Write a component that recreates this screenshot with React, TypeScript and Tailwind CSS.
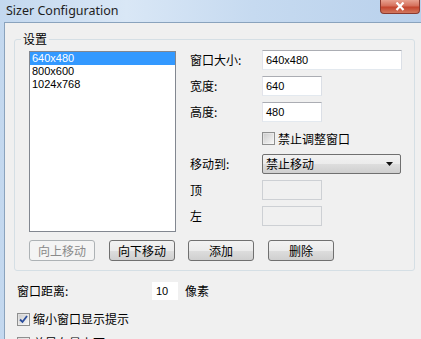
import React from 'react';

const cjk = { fontFamily: '"Noto Sans CJK SC", "Liberation Sans", sans-serif' };
const latin = { fontFamily: '"Liberation Sans", "DejaVu Sans", sans-serif' };

function CheckBox({ checked }: { checked?: boolean }) {
  return (
    <span className="w-[13px] h-[13px] border border-[#8e8f8f] bg-gradient-to-br from-[#dcdcdc] to-[#f8f8f8] flex items-center justify-center shrink-0">
      <span className="w-[9px] h-[9px] bg-gradient-to-br from-[#cfcfcf] to-[#f4f4f4] flex items-center justify-center">
        {checked && (
          <svg width="9" height="9" viewBox="0 0 9 9">
            <path d="M1 4.5 L3.5 7 L8 1" fill="none" stroke="#2a4d9c" strokeWidth="1.8" />
          </svg>
        )}
      </span>
    </span>
  );
}

function Btn({ label, disabled }: { label: string; disabled?: boolean }) {
  return (
    <div
      className={`w-[66px] h-[21px] rounded-[3px] border flex items-center justify-center text-[12px] ${
        disabled
          ? 'border-[#adb2b5] bg-[#f4f4f4] text-[#8a8a8a]'
          : 'border-[#707070] bg-[linear-gradient(#f2f2f2_0%,#ebebeb_50%,#dddddd_51%,#cfcfcf_100%)] text-black'
      }`}
      style={cjk}
    >
      {label}
    </div>
  );
}

function Field({ w, value, disabled }: { w: string; value?: string; disabled?: boolean }) {
  return (
    <div
      className={`${w} h-[20px] border flex items-center pl-[3px] text-[11px] ${
        disabled ? 'border-[#cdd0d4] bg-[#f0f0f0]' : 'border-[#abadb3] border-t-[#abadb3] border-l-[#e2e3ea] border-r-[#dbdfe6] border-b-[#e3e9ef] bg-white'
      }`}
      style={latin}
    >
      {value}
    </div>
  );
}

export default function App() {
  const items = ['640x480', '800x600', '1024x768'];
  return (
    <div className="w-[421px] h-[339px] overflow-hidden bg-[linear-gradient(90deg,#c3d8ef,#d9e7f6_30%,#c6daf0_60%,#b9d1ec)] relative text-black">
      {/* title bar */}
      <div className="h-[22px] flex items-center pl-[6px] pt-[1px] text-[12.5px] text-[#1e1e1e]" style={{ fontFamily: '"Noto Sans", "Open Sans", sans-serif' }}>
        Sizer Configuration
      </div>
      <div className="absolute top-0 left-[380px] w-[40px] h-[14px] rounded-b-[4px] border border-t-0 border-[#8a3a30] bg-[linear-gradient(#e8a190,#d5705c_45%,#c4452e_55%,#d2785f)] flex items-center justify-center">
        <svg width="10" height="9" viewBox="0 0 10 9">
          <path d="M1.5 0.5 L8.5 8 M8.5 0.5 L1.5 8" stroke="white" strokeWidth="2.2" />
        </svg>
      </div>

      {/* client area */}
      <div className="ml-[4px] h-[317px] border-l border-t border-[#8aa3bd] bg-[#f0f0f0] pl-[9px] pt-[16px]" style={cjk}>
        {/* group box */}
        <div className="relative w-[401px] border border-[#d5dfe5] rounded-[3px] pl-[14px] pt-[11px] pb-[9px]">
          <span className="absolute -top-[10px] left-[6px] px-[2px] bg-[#f0f0f0] text-[12px] leading-[18px]">设置</span>
          <div className="flex">
            <div className="w-[147px] h-[181px] border border-[#828790] bg-white text-[11px] leading-[13px]" style={latin}>
              {items.map((it, i) => (
                <div key={it} className={`pl-[2px] h-[13px] ${i === 0 ? 'bg-[#3399ff] text-white' : 'text-black'}`}>
                  {it}
                </div>
              ))}
            </div>
            <div className="ml-[14px] -mt-[1px] grid grid-cols-[72px_auto] auto-rows-[20px] gap-y-[6px] text-[12px] items-center">
              <span>窗口大小:</span>
              <Field w="w-[140px]" value="640x480" />
              <span>宽度:</span>
              <Field w="w-[60px]" value="640" />
              <span>高度:</span>
              <Field w="w-[60px]" value="480" />
              <span />
              <label className="flex items-center gap-[3px] mt-[1px]">
                <CheckBox />
                <span>禁止调整窗口</span>
              </label>
              <span>移动到:</span>
              <div className="w-[139px] h-[20px] rounded-[2px] border border-[#707070] bg-[linear-gradient(#f2f2f2_0%,#ebebeb_50%,#dddddd_51%,#cfcfcf_100%)] flex items-center justify-between pl-[3px] pr-[7px]">
                <span>禁止移动</span>
                <svg width="7" height="4" viewBox="0 0 7 4">
                  <path d="M0 0 H7 L3.5 4 Z" fill="#111" />
                </svg>
              </div>
              <span>顶</span>
              <Field w="w-[60px]" disabled />
              <span>左</span>
              <Field w="w-[60px]" disabled />
            </div>
          </div>
          <div className="flex mt-[8px]">
            <Btn label="向上移动" disabled />
            <div className="ml-[14px]"><Btn label="向下移动" /></div>
            <div className="ml-[13px]"><Btn label="添加" /></div>
            <div className="ml-[14px]"><Btn label="删除" /></div>
          </div>
        </div>

        {/* bottom section */}
        <div className="flex items-center mt-[11px] pl-[3px] text-[12px]">
          <span className="w-[135px]">窗口距离:</span>
          <div className="w-[26px] h-[18px] bg-white flex items-center pl-[4px] text-[11px]" style={latin}>10</div>
          <span className="ml-[7px]">像素</span>
        </div>
        <label className="flex items-center gap-[3px] mt-[10px] pl-[3px] text-[12px]">
          <CheckBox checked />
          <span>缩小窗口显示提示</span>
        </label>
        <label className="flex items-center gap-[3px] mt-[6px] pl-[3px] text-[12px]">
          <CheckBox />
          <span>总是在最上面</span>
        </label>
      </div>
    </div>
  );
}
